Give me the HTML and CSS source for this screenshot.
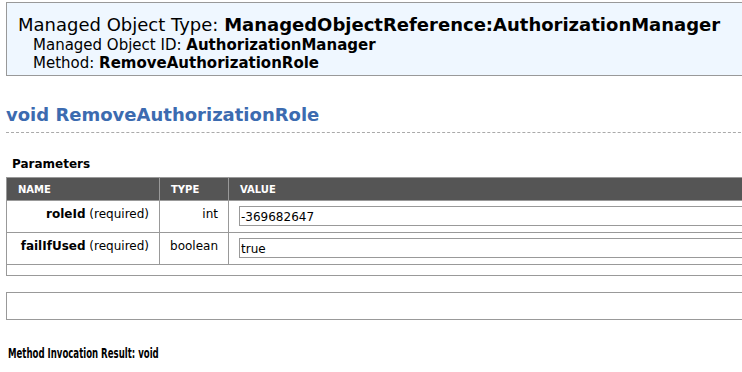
FILE: index.html
```html
<!DOCTYPE html>
<html lang="en">
<head>
    <meta charset="UTF-8">
    <title>RemoveAuthorizationRole</title>
    <link rel="stylesheet" href="styles.css">
</head>
<body>
    <div class="header">
        <div class="mo-type">Managed Object Type: <strong>ManagedObjectReference:AuthorizationManager</strong></div>
        <div class="mo-line">Managed Object ID: <strong>AuthorizationManager</strong></div>
        <div class="mo-line">Method: <strong>RemoveAuthorizationRole</strong></div>
    </div>

    <h1 class="method">void RemoveAuthorizationRole</h1>

    <h3 class="section">Parameters</h3>
    <table class="params">
        <tr>
            <th class="col-name">NAME</th>
            <th class="col-type">TYPE</th>
            <th>VALUE</th>
        </tr>
        <tr>
            <td class="name"><strong>roleId</strong> (required)</td>
            <td class="type">int</td>
            <td class="value"><input class="val" type="text" value="-369682647"></td>
        </tr>
        <tr>
            <td class="name"><strong>failIfUsed</strong> (required)</td>
            <td class="type">boolean</td>
            <td class="value"><input class="val" type="text" value="true"></td>
        </tr>
        <tr class="empty">
            <td colspan="3"></td>
        </tr>
    </table>

    <div class="invoke"></div>

    <h3 class="result"><span>Method Invocation Result: void</span></h3>
</body>
</html>
```

FILE: styles.css
```css
body {
    margin: 0;
    padding: 2px 0 0 6px;
    width: 760px;
    font-family: Verdana, "DejaVu Sans", sans-serif;
    font-size: 13px;
    color: #000;
}

.header {
    background-color: #eff7ff;
    border: 1px solid #999;
    padding: 11px 0 3px 11px;
}

.mo-type {
    font-size: 18px;
    line-height: 22px;
}

.mo-line {
    font-size: 15px;
    line-height: 18px;
    padding-left: 15px;
}

.method {
    margin: 27px 0 0 0;
    font-size: 18px;
    line-height: 24px;
    color: #3c6bb0;
    border-bottom: 1px dashed #aaa;
    padding-bottom: 5px;
}

.section {
    margin: 23px 0 5px 6px;
    font-size: 12px;
    line-height: 16px;
}

.params {
    border-collapse: collapse;
    width: 100%;
    border: 1px solid #999;
}

.params th {
    background-color: #555;
    color: #fff;
    font-size: 10px;
    text-align: left;
    height: 22px;
    padding: 0 0 0 11px;
    border: 1px solid #999;
}

.col-name {
    width: 141px;
}

.col-type {
    width: 57px;
}

.params td {
    border: 1px solid #999;
    height: 26px;
    padding: 5px 10px 0 5px;
    font-size: 12px;
    line-height: 16px;
    vertical-align: top;
}

.name,
.type {
    text-align: right;
}

.params td.value {
    padding: 5px 0 0 10px;
}

.val {
    display: block;
    box-sizing: border-box;
    width: 100%;
    height: 20px;
    border: 1px solid #999;
    font-family: Verdana, "DejaVu Sans", sans-serif;
    font-size: 12px;
    padding: 2px 1px 0;
    margin: 0;
}

.params tr.empty td {
    height: 10px;
    padding: 0;
}

.invoke {
    margin-top: 16px;
    height: 26px;
    border: 1px solid #999;
}

.result {
    margin: 25px 0 0 2px;
    font-family: "DejaVu Sans Condensed", "DejaVu Sans", sans-serif;
    font-size: 14px;
}

.result span {
    display: inline-block;
    transform: scaleX(0.68);
    transform-origin: left center;
    white-space: nowrap;
}
```
